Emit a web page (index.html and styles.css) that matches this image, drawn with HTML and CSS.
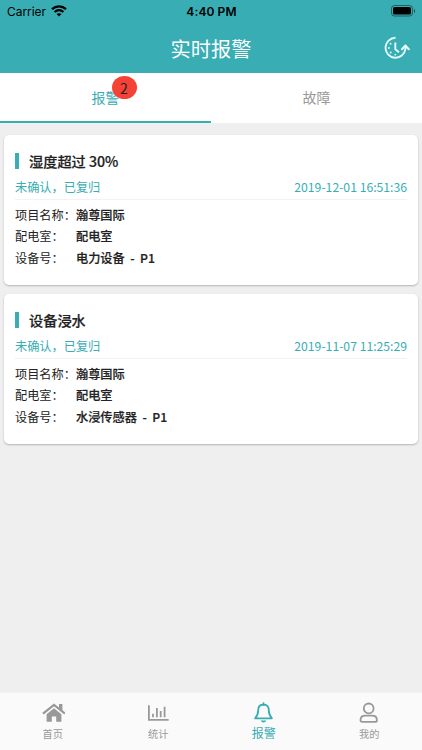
FILE: index.html
```html
<!DOCTYPE html>
<html lang="zh-CN">
<head>
  <meta charset="UTF-8">
  <meta name="viewport" content="width=device-width, initial-scale=1.0">
  <title>实时报警</title>
  <link rel="stylesheet" href="styles.css">
</head>
<body>

  <header>
    <div class="status-bar">
      <div class="carrier">
        <span>Carrier</span>
        <svg width="16" height="12" viewBox="0 0 16 12" fill="none" stroke="#000" stroke-width="2.3">
          <path d="M1 4.2C5 .4 11 .4 15 4.2"/>
          <path d="M3.6 7c2.6-2.4 6.2-2.4 8.8 0"/>
          <path d="M5.5 9c1.4-1.1 3.6-1.1 5 0L8 11.6z" fill="#000" stroke="none"/>
        </svg>
      </div>
      <div class="time">4:40 PM</div>
      <div class="battery">
        <svg width="25" height="12" viewBox="0 0 25 12">
          <rect x=".5" y=".5" width="21" height="10.5" rx="3" fill="none" stroke="#000" stroke-opacity=".45"/>
          <rect x="2" y="2" width="18" height="7.5" rx="1.6"/>
          <path d="M23 4v4c1.6-.7 1.6-3.3 0-4z" fill-opacity=".5"/>
        </svg>
      </div>
    </div>
    <div class="nav-bar">
      <h1>实时报警</h1>
      <a class="history" href="#">
        <svg width="26" height="24" viewBox="0 0 26 24" fill="none" stroke="#e6fbfc" stroke-width="1.9" stroke-linejoin="round">
          <path d="M11.5 1.8A10 10 0 1 0 21.4 13v-1.5"/>
          <path d="M18 13.2l3.4-3.7 3.4 3.7" stroke-width="2.1" stroke-linecap="round"/>
          <path d="M11.3 6.6v6.6l3.7 3.1"/>
          <path d="M6.6 7.7v0M4.9 12v0M6.7 16.5v0M11.3 18.6v0" stroke-width="1.9" stroke-linecap="round"/>
        </svg>
      </a>
    </div>
  </header>

  <div class="tabs">
    <a class="tab active" href="#"><span class="tab-text">报警<span class="badge">2</span></span></a>
    <a class="tab" href="#">故障</a>
  </div>

  <main>
    <section class="card">
      <h2>湿度超过 30%</h2>
      <div class="state"><span>未确认，已复归</span><span>2019-12-01 16:51:36</span></div>
      <dl>
        <dt>项目名称：</dt><dd>瀚尊国际</dd>
        <dt>配电室：</dt><dd>配电室</dd>
        <dt>设备号：</dt><dd>电力设备&nbsp; -&nbsp; P1</dd>
      </dl>
    </section>

    <section class="card">
      <h2>设备浸水</h2>
      <div class="state"><span>未确认，已复归</span><span>2019-11-07 11:25:29</span></div>
      <dl>
        <dt>项目名称：</dt><dd>瀚尊国际</dd>
        <dt>配电室：</dt><dd>配电室</dd>
        <dt>设备号：</dt><dd>水浸传感器&nbsp; -&nbsp; P1</dd>
      </dl>
    </section>
  </main>

  <nav class="tab-bar">
    <a href="#">
      <svg width="24" height="22" viewBox="0 0 24 22" fill="#999">
        <path d="M2 11.6L13 2.8l11 8.8" fill="none" stroke="#999" stroke-width="2.2"/>
        <path d="M18 2h3.4v8L18 7.2zM5.6 12.2L13 6.2l7.4 6V19.8h-5.2v-5.2h-4.4v5.2H5.6z"/>
      </svg>
      <span>首页</span>
    </a>
    <a href="#">
      <svg width="22" height="22" viewBox="0 0 22 22" fill="none" stroke="#999" stroke-width="1.8">
        <path d="M1.9 3.2v14.6h19.8"/>
        <path d="M6 15.2v-3.5M9.9 15.2V6M13.7 15.2V9M17.6 15.2V4.8"/>
      </svg>
      <span>统计</span>
    </a>
    <a class="active" href="#">
      <svg width="20" height="22" viewBox="0 0 20 22" fill="none" stroke="#38adb4" stroke-width="1.8" stroke-linejoin="round">
        <path d="M9.5 2.5C6.1 2.5 4.2 5 4.2 8.3c0 4.2-1 5.8-3.1 8h16.8c-2.1-2.2-3.1-3.8-3.1-8 0-3.3-1.9-5.8-5.3-5.8z"/>
        <path d="M9.5 1.2v1.6" stroke-linecap="round"/>
        <path d="M6.8 18.6h5.4c-.5 2.6-4.9 2.6-5.4 0z" fill="#38adb4" stroke="none"/>
      </svg>
      <span>报警</span>
    </a>
    <a href="#">
      <svg width="20" height="22" viewBox="0 0 20 22" fill="none" stroke="#999" stroke-width="1.8">
        <circle cx="9.7" cy="6.4" r="4.9"/>
        <path d="M6.2 13.7h7c3 0 4.7 2 4.7 4.5 0 1.1-.6 1.7-1.7 1.7h-13c-1.1 0-1.7-.6-1.7-1.7 0-2.5 1.7-4.5 4.7-4.5z"/>
      </svg>
      <span>我的</span>
    </a>
  </nav>

</body>
</html>
```
FILE: styles.css
```css
* {
  box-sizing: border-box;
}

body {
  margin: 0;
  height: 100vh;
  display: flex;
  flex-direction: column;
  overflow: hidden;
  background-color: #efefef;
  color: #222;
  font-family: "Noto Sans CJK SC", sans-serif;
}

a {
  color: inherit;
  text-decoration: none;
}

svg {
  display: block;
}

header {
  height: 73px;
  background-color: #38adb4;
}

.status-bar {
  display: grid;
  grid-template-columns: 1fr auto 1fr;
  align-items: center;
  height: 22px;
  padding: 0 6px 0 7px;
  color: #000;
  font-family: Inter, sans-serif;
  font-size: 12px;
}

.carrier {
  display: flex;
  align-items: center;
  gap: 5px;
  letter-spacing: -0.05px;
}

.time {
  font-weight: 600;
  letter-spacing: 0.1px;
}

.battery {
  justify-self: end;
}

.nav-bar {
  display: grid;
  grid-template-columns: 1fr auto 1fr;
  align-items: center;
  height: 51px;
  padding: 0 12px;
  color: #fff;
}

h1 {
  grid-column: 2;
  margin: 0;
  padding-top: 2px;
  font-size: 20.2px;
  font-weight: 400;
  line-height: 30px;
}

.history {
  justify-self: end;
  padding-top: 1px;
}

.tabs {
  display: flex;
  height: 50px;
  background-color: #fff;
}

.tab {
  flex: 1;
  height: 50px;
  color: #999;
  font-size: 14px;
  line-height: 49px;
  text-align: center;
}

.tab.active {
  color: #38adb4;
  border-bottom: 2px solid #38adb4;
}

.tab-text {
  position: relative;
}

/* unread count over the tab text */
.badge {
  position: absolute;
  top: -11px;
  left: 20px;
  width: 25px;
  height: 23px;
  border-radius: 50%;
  background-color: #f44336;
  color: #222;
  line-height: 24px;
}

main {
  flex: 1;
  padding: 12px 4px 0;
}

.card {
  height: 150px;
  margin-bottom: 9px;
  padding: 15px 11px 0;
  border-radius: 5px;
  background-color: #fff;
  box-shadow: 0 1px 2px rgba(0, 0, 0, 0.25);
}

h2 {
  display: flex;
  align-items: center;
  gap: 10px;
  height: 22px;
  margin: 0;
  font-size: 14.2px;
  font-weight: 500;
  -webkit-text-stroke: 0.2px;
}

h2::before {
  content: "";
  width: 4px;
  height: 16px;
  background-color: #38adb4;
}

.state {
  display: flex;
  justify-content: space-between;
  height: 28px;
  border-bottom: 1px solid #f2f2f2;
  color: #38adb4;
  font-size: 12.2px;
  line-height: 30px;
}

dl {
  display: grid;
  grid-template-columns: 61px 1fr;
  margin: 5px 0 0;
  font-size: 12.2px;
  line-height: 21.4px;
}

dd {
  margin: 0;
  font-weight: 500;
  -webkit-text-stroke: 0.2px;
}

.tab-bar {
  display: flex;
  height: 58px;
  border-top: 1px solid #f2f2f2;
  background-color: #fafafa;
  color: #999;
}

.tab-bar a {
  flex: 1;
  display: flex;
  flex-direction: column;
  align-items: center;
  padding-top: 9px;
  font-size: 10.2px;
  line-height: 19px;
}

.tab-bar .active {
  color: #38adb4;
  font-size: 12px;
  line-height: 18px;
}
```
